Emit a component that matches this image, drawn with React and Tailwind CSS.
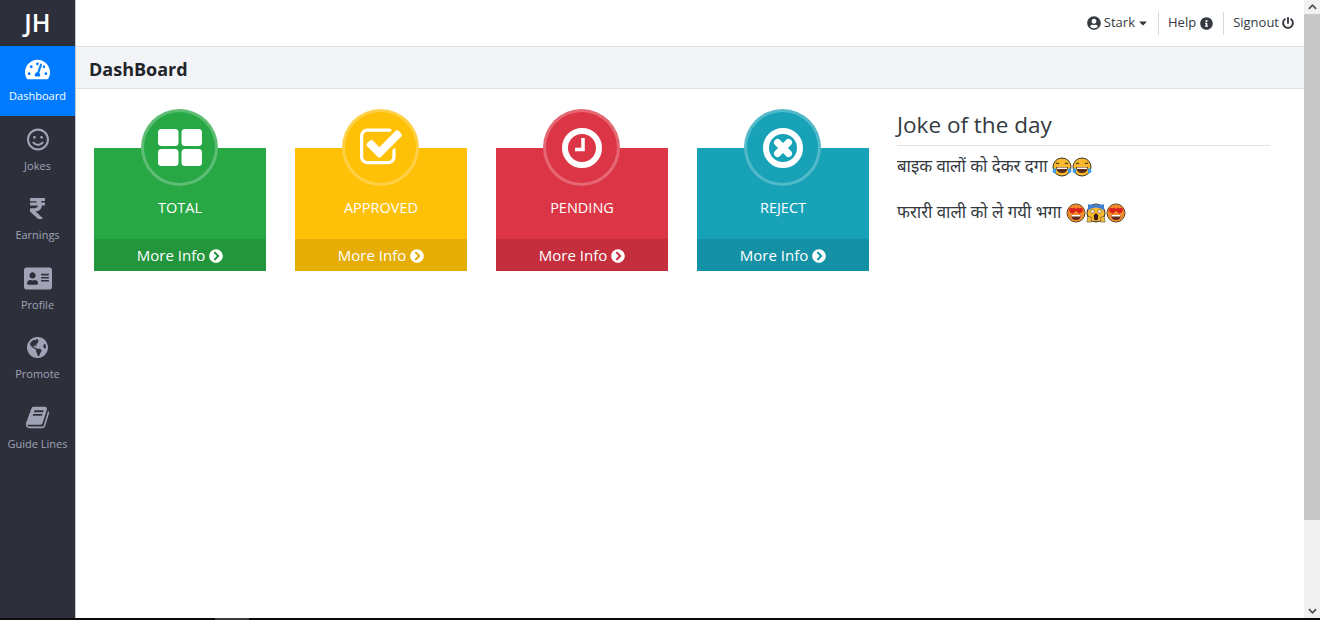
import React from "react";
import {
  FaTachometerAlt, FaRegSmile, FaRupeeSign, FaAddressCard, FaGlobeAmericas,
  FaChevronCircleRight, FaUserCircle, FaCaretDown, FaInfoCircle, FaPowerOff,
} from "react-icons/fa";

const Book = ({ className }) => (
  <svg viewBox="0 0 1792 1792" className={className} fill="currentColor">
    <path d="M1703 478q40 57 18 129l-275 906q-19 64-76.500 107.500t-122.500 43.500h-923q-77 0-148.500-53.500t-99.500-131.500q-24-67-2-127 0-4 3-27t4-37q1-8-3-21.500t-3-19.500q2-11 8-21t16.500-23.500 16.500-23.500q23-38 45-91.500t30-91.500q3-10 .5-30t-.5-28q3-11 17-28t17-23q21-36 42-92t25-90q1-9-2.500-32t.5-28q4-13 22-30.500t22-22.500q19-26 42.500-84.500t27.500-96.500q1-8-3-25.500t-2-26.500q2-8 9-18t18-23 17-21q8-12 16.500-30.500t15-35 16-36 19.500-32 26.500-23.500 36-11.500 47.500 5.500l-1 3q38-9 51-9h761q74 0 114 56t18 130l-274 906q-36 119-71.500 153.500t-128.500 34.500h-869q-27 0-38 15-11 16-1 43 24 70 144 70h923q29 0 56-15.500t35-41.500l300-987q7-22 5-57 38 15 59 43zm-1064 2q-4 13 2 22.500t20 9.500h608q13 0 25.500-9.500t16.500-22.500l21-64q4-13-2-22.500t-20-9.500h-608q-13 0-25.500 9.500t-16.500 22.500zm-83 256q-4 13 2 22.500t20 9.500h608q13 0 25.500-9.500t16.500-22.500l21-64q4-13-2-22.500t-20-9.500h-608q-13 0-25.500 9.500t-16.500 22.500z" />
  </svg>
);
const Grid = () => (
  <svg viewBox="0 0 44 37" className="w-[44px] h-[37px]" fill="white">
    <rect x="0" y="0" width="20.500" height="17" rx="3.500" />
    <rect x="23.500" y="0" width="20.500" height="17" rx="3.500" />
    <rect x="0" y="20" width="20.500" height="17" rx="3.500" />
    <rect x="23.500" y="20" width="20.500" height="17" rx="3.500" />
  </svg>
);
const CheckSquare = () => (
  <svg viewBox="0 0 1664 1792" className="w-[42px] h-[46px]" fill="white">
    <path d="M1408 930v318q0 119-84.500 203.500t-203.500 84.500h-832q-119 0-203.500-84.500t-84.500-203.500v-832q0-119 84.500-203.500t203.500-84.500h832q63 0 117 25 15 7 18 23 3 17-9 29l-49 49q-10 10-23 10-3 0-9-2-23-6-45-6h-832q-66 0-113 47t-47 113v832q0 66 47 113t113 47h832q66 0 113-47t47-113v-254q0-13 9-22l64-64q10-10 23-10 6 0 12 3 20 8 20 29zm231-489l-814 814q-24 24-57 24t-57-24l-430-430q-24-24-24-57t24-57l110-110q24-24 57-24t57 24l263 263 647-647q24-24 57-24t57 24l110 110q24 24 24 57t-24 57z" />
  </svg>
);
const Clock = () => (
  <svg viewBox="0 0 40 40" className="w-10 h-10" fill="none" stroke="white">
    <circle cx="20" cy="20" r="17" strokeWidth="6" />
    <path d="M21 10v11.500h-8" strokeWidth="3.500" />
  </svg>
);
const TimesCircle = () => (
  <svg viewBox="0 0 40 40" className="w-10 h-10" fill="none" stroke="white">
    <circle cx="20" cy="20" r="17" strokeWidth="6" />
    <path d="M14.500 14.500l11 11M25.500 14.500l-11 11" strokeWidth="7" strokeLinecap="round" />
  </svg>
);

const Emoji = ({ kind }) => (
  <svg viewBox="0 0 20 20" className="w-[20px] h-[20px] inline-block align-[-5px]">
    <circle cx="10" cy="10" r="9" fill="#fbb92d" stroke="#3b3320" strokeWidth="1" />
    {kind === "joy" && (
      <>
        <path d="M4 7q1.500-2 3 0M13 7q1.500-2 3 0" stroke="#3b3320" strokeWidth="1.200" fill="none" />
        <path d="M4 10h12q-.5 6-6 6t-6-6z" fill="#5a2a1a" />
        <path d="M5 10.500h10v1.500h-10z" fill="white" />
        <path d="M1.500 11l3 1-1 5-3-2zM18.500 11l-3 1 1 5 3-2z" fill="#3b9be8" />
      </>
    )}
    {kind === "love" && (
      <>
        <circle cx="10" cy="10" r="8.500" fill="#f58a2c" />
        <path d="M3 7c0-2.800 3.500-2.800 3.500-.8 0-2 3.500-2 3.500.8 0 1.700-3.500 3.800-3.500 3.800s-3.500-2.100-3.500-3.800zM10 7c0-2.800 3.500-2.800 3.500-.8 0-2 3.500-2 3.500.8 0 1.700-3.500 3.800-3.500 3.800s-3.500-2.100-3.500-3.800z" fill="#d9201c" />
        <path d="M5 12h10q-.5 5-5 5t-5-5z" fill="#5a2a1a" />
        <path d="M5.500 12h9v1.500h-9z" fill="white" />
      </>
    )}
    {kind === "fear" && (
      <>
        <path d="M2 1.500h16v6q-4-3-8-3t-8 3z" fill="#3f7fd0" />
        <circle cx="6.500" cy="8.500" r="1.700" fill="white" stroke="#3b3320" strokeWidth=".5" />
        <circle cx="13.500" cy="8.500" r="1.700" fill="white" stroke="#3b3320" strokeWidth=".5" />
        <ellipse cx="10" cy="14" rx="2.200" ry="3.500" fill="#3a1c10" />
        <path d="M1 19l1-6 3 1 .5 5zM19 19l-1-6-3 1-.5 5z" fill="#f0c040" stroke="#3b3320" strokeWidth=".5" />
      </>
    )}
  </svg>
);

const nav = [
  { label: "Dashboard", Icon: FaTachometerAlt, cls: "w-[25px] h-[25px]", active: true },
  { label: "Jokes", Icon: FaRegSmile, cls: "w-[22px] h-[25px]" },
  { label: "Earnings", Icon: FaRupeeSign, cls: "w-[15px] h-[25px]" },
  { label: "Profile", Icon: FaAddressCard, cls: "w-[28px] h-[25px]" },
  { label: "Promote", Icon: FaGlobeAmericas, cls: "w-[21px] h-[25px]" },
  { label: "Guide Lines", Icon: Book, cls: "w-[25px] h-[25px]" },
];

const cards = [
  { label: "TOTAL", bg: "bg-[#28a745]", icon: <Grid /> },
  { label: "APPROVED", bg: "bg-[#ffc107]", icon: <CheckSquare /> },
  { label: "PENDING", bg: "bg-[#dc3545]", icon: <Clock /> },
  { label: "REJECT", bg: "bg-[#17a2b8]", icon: <TimesCircle /> },
];

function Card({ label, bg, icon }) {
  return (
    <div className="w-[172px] flex flex-col items-center">
      <div className={`${bg} w-[77px] h-[77px] mr-[1px] rounded-full border-[3px] border-white/25 flex items-center justify-center z-10 shrink-0`}>
        {icon}
      </div>
      <div className={`${bg} w-full h-[123px] -mt-[38px] flex flex-col text-white`}>
        <div className="h-[91px] flex items-end justify-center pb-[19px] text-[14.500px] leading-[24px]">{label}</div>
        <div className="h-[32px] pt-[1px] bg-black/10 flex items-center justify-center gap-[4px] text-[15px]">
          More Info <FaChevronCircleRight className="w-[14px] h-[14px]" />
        </div>
      </div>
    </div>
  );
}

export default function App() {
  return (
    <div
      className="w-[1320px] h-[620px] overflow-hidden flex flex-col bg-white text-[#343a40]"
      style={{ fontFamily: '"Open Sans", "Noto Sans", "Noto Sans Devanagari", "DejaVu Sans", sans-serif' }}
    >
      <div className="flex flex-1 min-h-0">
        <aside className="w-[76px] shrink-0 bg-[#2d303b] border-r border-[#c4c6d0] flex flex-col">
          <div className="h-[46px] flex items-center justify-center text-white text-[25px] font-semibold">JH</div>
          {nav.map(({ label, Icon, cls, active }) => (
            <div
              key={label}
              className={`h-[69.500px] flex flex-col items-center pt-[11px] ${active ? "bg-[#007bff] text-white" : "text-[#9fa3b5]"}`}
            >
              <Icon className={cls} />
              <span className="mt-[6px] text-[11px] leading-[16px] whitespace-nowrap">{label}</span>
            </div>
          ))}
        </aside>

        <main className="flex-1 min-w-0 flex flex-col">
          <header className="h-[46px] shrink-0 flex items-center justify-end pr-[10px] text-[13px]">
            <div className="flex items-center gap-[3px] pr-[10px] h-[23px] border-r border-[#d9d9d9]">
              <FaUserCircle className="w-[14px] h-[14px]" /> Stark <FaCaretDown className="w-[10px] h-[12px]" />
            </div>
            <div className="flex items-center gap-[4px] pl-[9px] pr-[10px] h-[23px] border-r border-[#d9d9d9]">
              Help <FaInfoCircle className="w-[13px] h-[13px]" />
            </div>
            <div className="flex items-center gap-[3px] pl-[9px] h-[23px]">
              Signout <FaPowerOff className="w-[12px] h-[12px]" />
            </div>
          </header>
          <div className="h-[43px] shrink-0 bg-[#f3f4f8] border-y border-[#dfe0e8] flex items-center pl-[13px] pt-[3px] text-[18px] font-bold text-[#212529]">
            DashBoard
          </div>
          <div className="flex pl-[18px] pt-[20px]">
            <div className="flex gap-[29px] items-start">
              {cards.map((c) => <Card key={c.label} {...c} />)}
            </div>
            <div className="ml-[28px] w-[373px]">
              <h2 className="text-[22.500px] leading-[30px] pt-[1px] pb-[5px] border-b border-[#e3e3e3]">Joke of the day</h2>
              <p className="mt-[8px] text-[16.800px] leading-[24px]">बाइक वालों को देकर दगा <Emoji kind="joy" /><Emoji kind="joy" /></p>
              <p className="mt-[22px] text-[16.800px] leading-[24px]">फरारी वाली को ले गयी भगा <Emoji kind="love" /><Emoji kind="fear" /><Emoji kind="love" /></p>
            </div>
          </div>
        </main>

        <div className="w-[16px] shrink-0 bg-[#f1f1f1] flex flex-col items-center">
          <svg viewBox="0 0 10 6" className="w-[9px] h-[14px] shrink-0" fill="none" stroke="#505050" strokeWidth="2"><path d="M1 5l4-4 4 4" /></svg>
          <div className="w-full h-[506px] bg-[#c8c8c8] shrink-0" />
          <div className="flex-1" />
          <svg viewBox="0 0 10 6" className="w-[9px] h-[14px] shrink-0" fill="none" stroke="#505050" strokeWidth="2"><path d="M1 1l4 4 4-4" /></svg>
        </div>
      </div>
      <div className="h-[2px] shrink-0 bg-[#0b0b0b] flex pl-[215px]">
        <div className="w-[34px] bg-[#3c3c3c]" />
      </div>
    </div>
  );
}
